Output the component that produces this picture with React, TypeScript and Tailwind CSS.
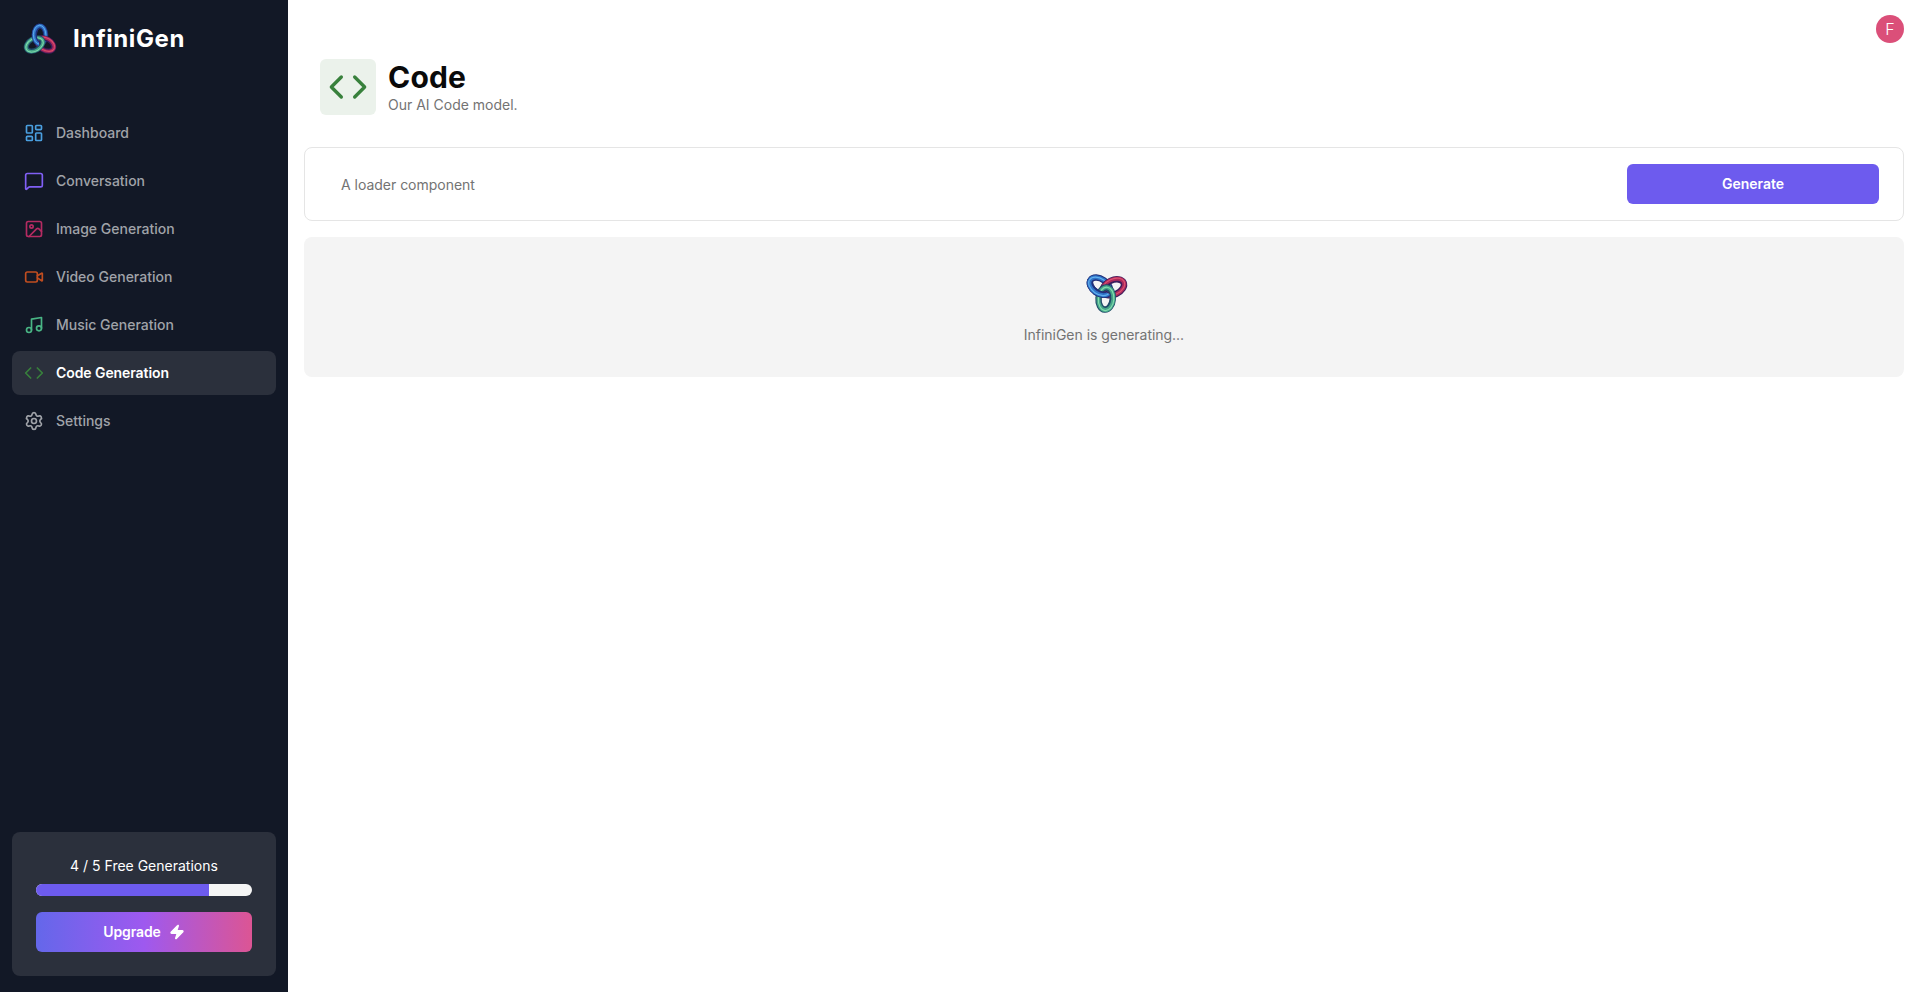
import React from "react";
import {
  Code,
  Image as ImageIcon,
  LayoutDashboard,
  MessageSquare,
  Music,
  Settings,
  Video,
  Zap,
  type LucideIcon,
} from "lucide-react";

type Route = { label: string; icon: LucideIcon; color: string; active?: boolean };

const routes: Route[] = [
  { label: "Dashboard", icon: LayoutDashboard, color: "text-[#4a9fe0]" },
  { label: "Conversation", icon: MessageSquare, color: "text-[#805ff5]" },
  { label: "Image Generation", icon: ImageIcon, color: "text-[#b52b62]" },
  { label: "Video Generation", icon: Video, color: "text-[#c04d20]" },
  { label: "Music Generation", icon: Music, color: "text-[#49b585]" },
  { label: "Code Generation", icon: Code, color: "text-[#38813c]", active: true },
  { label: "Settings", icon: Settings, color: "text-[#a0a3a9]" },
];

function Ring({ angle, edge, body, shine }: { angle: number; edge: string; body: string; shine: string }) {
  return (
    <g transform={`rotate(${angle} 16 18.3)`} fill="none">
      <ellipse cx="16" cy="12" rx="5.7" ry="8.9" stroke={edge} strokeWidth="5.2" />
      <ellipse cx="15.8" cy="11.9" rx="6" ry="9.2" stroke={body} strokeWidth="3.2" />
      <ellipse cx="15.6" cy="11.7" rx="6.2" ry="9.4" stroke={shine} strokeWidth="0.9" />
    </g>
  );
}

function Logo({ id, className }: { id: string; className: string }) {
  const blue = <Ring angle={0} edge="#20307a" body="#2f74c8" shine="#62b0ee" />;
  return (
    <svg viewBox="0 0 32 32" className={className} aria-hidden="true">
      <defs>
        <clipPath id={id}>
          <path d="M0 0H15V32H0Z" />
        </clipPath>
      </defs>
      {blue}
      <Ring angle={120} edge="#3a1d5c" body="#ad2a5b" shine="#dd5272" />
      <Ring angle={240} edge="#204a68" body="#45a588" shine="#83dcae" />
      <g clipPath={`url(#${id})`}>{blue}</g>
    </svg>
  );
}

function Sidebar() {
  return (
    <aside className="flex w-72 shrink-0 flex-col bg-[#121826] px-3 pb-4 pt-[23px] text-white">
      <div className="mb-14 flex h-8 items-center pl-3">
        <Logo id="brand-knot" className="mr-4 size-8 overflow-visible" />
        <span className="pl-px text-[24px] font-bold leading-8 tracking-[0.6px]">InfiniGen</span>
      </div>
      <nav className="flex flex-1 flex-col gap-1">
        {routes.map(({ label, icon: Icon, color, active }) => (
          <a
            key={label}
            className={`flex h-11 items-center rounded-lg px-3 text-sm ${
              active ? "bg-[#2b303c] font-semibold tracking-[-0.08px] text-white" : "font-medium text-[#a0a3a9]"
            }`}
          >
            <Icon className={`mr-3 size-5 ${color}`} />
            {label}
          </a>
        ))}
      </nav>
      <section className="flex h-36 flex-col rounded-lg bg-[#2b303c] px-6 pt-6">
        <p className="text-center text-sm leading-5">4 / 5 Free Generations</p>
        <div className="mt-2 h-3 overflow-hidden rounded-full bg-[#f5f5f5]">
          <div className="h-full w-4/5 bg-[#6d5bee]" />
        </div>
        <button className="mt-4 flex h-10 items-center justify-center rounded-md bg-[linear-gradient(90deg,#6467ea,#9e59ef_50%,#dc5594)] text-sm font-semibold tracking-[-0.1px]">
          Upgrade
          <Zap className="ml-2 size-4 fill-white" />
        </button>
      </section>
    </aside>
  );
}

export default function App() {
  return (
    <div className="flex h-[992px] w-full bg-white font-[Inter,sans-serif] text-[#0a0a0a]">
      <Sidebar />
      <main className="flex min-w-0 flex-1 flex-col px-4">
        <header className="flex h-[59px] justify-end pt-[15px]">
          <div className="flex size-7 items-center justify-center rounded-full bg-[#db4f79] text-base font-light leading-none text-white">
            F
          </div>
        </header>
        <div className="mb-8 flex h-14 items-center gap-3 px-4">
          <div className="flex size-14 items-center justify-center rounded-md bg-[#ebf2eb]">
            <Code className="size-10 text-[#38813c]" />
          </div>
          <div>
            <h1 className="text-3xl font-bold tracking-[0.2px]">Code</h1>
            <p className="text-sm text-[#737373]">Our AI Code model.</p>
          </div>
        </div>
        <form className="flex h-[74px] items-center justify-between rounded-lg border border-[#e5e5e5] pl-9 pr-6">
          <span className="pt-0.5 text-sm tracking-[-0.02px] text-[#737373]">A loader component</span>
          <button
            type="button"
            className="h-10 w-[252px] rounded-md bg-[#6d5bee] text-sm font-semibold tracking-[-0.05px] text-white"
          >
            Generate
          </button>
        </form>
        <section className="mt-4 flex h-[140px] flex-col items-center justify-center gap-4 rounded-lg bg-[#f4f4f4]">
          <Logo id="loader-knot" className="size-10 -rotate-[55deg] overflow-visible" />
          <p className="text-sm tracking-[-0.03px] text-[#737373]">InfiniGen is generating...</p>
        </section>
      </main>
    </div>
  );
}
